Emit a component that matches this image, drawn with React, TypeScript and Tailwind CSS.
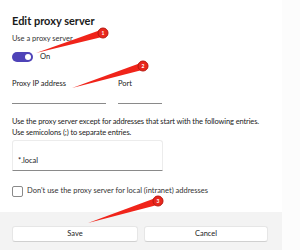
import React from 'react'

const font = { fontFamily: 'Lato, "Open Sans", sans-serif' }

function Marker({ tip, end, n }: { tip: [number, number]; end: [number, number]; n: string }) {
  const dx = end[0] - tip[0]
  const dy = end[1] - tip[1]
  const len = Math.hypot(dx, dy)
  const px = -dy / len
  const py = dx / len
  const w = 3.6
  const pts = [
    `${tip[0]},${tip[1]}`,
    `${end[0] + px * w},${end[1] + py * w}`,
    `${end[0] - px * w},${end[1] - py * w}`,
  ].join(' ')
  return (
    <g>
      <polygon points={pts} fill="#f0241a" />
      <circle cx={end[0]} cy={end[1]} r={5} fill="#e8271c" stroke="#b8160e" strokeWidth={1} />
      <text x={end[0]} y={end[1] + 1.8} fontSize={5} fill="#fff" textAnchor="middle" fontFamily="Lato, sans-serif" fontWeight={700}>
        {n}
      </text>
    </g>
  )
}

export default function App() {
  return (
    <div className="relative w-[300px] h-[250px] bg-white overflow-hidden flex text-[#1b1b1b]" style={font}>
      <div className="w-[282px] h-full flex flex-col">
        <div className="px-3 pt-[13px]">
          <h1 className="text-[11px] leading-[16px] font-bold text-[#1a1a1a]">Edit proxy server</h1>
          <p className="mt-[4px] text-[7.5px] leading-[12px] text-[#333]">Use a proxy server</p>
          <div className="mt-[7px] flex items-center gap-[7px] h-[10px]">
            <div className="w-[21px] h-[10px] rounded-full bg-[#4f43b8] flex items-center justify-end pr-[2px]">
              <div className="w-[6px] h-[6px] rounded-full bg-white" />
            </div>
            <span className="text-[7.5px] leading-[10px] text-[#222]">On</span>
          </div>

          <div className="mt-[16px] flex gap-[12px]">
            <div className="w-[94px]">
              <p className="text-[7.5px] leading-[12px] text-[#222]">Proxy IP address</p>
              <div className="h-[14px] border-b border-[#8a8a8a]" />
            </div>
            <div className="w-[44px]">
              <p className="text-[7.5px] leading-[12px] text-[#222]">Port</p>
              <div className="h-[14px] border-b border-[#8a8a8a]" />
            </div>
          </div>

          <p className="mt-[12px] text-[7.5px] leading-[11px] tracking-[-0.12px] text-[#222] whitespace-nowrap">
            Use the proxy server except for addresses that start with the following entries.
            <br />
            Use semicolons (;) to separate entries.
          </p>

          <div className="mt-[2px] w-[151px] h-[31px] border border-[#ececec] border-b-[#8a8a8a] rounded-t-[3px] px-[5px] pt-[4px]">
            <span className="text-[7.5px] leading-[12px] text-[#222]">*.local</span>
          </div>

          <div className="mt-[14px] flex items-center gap-[4px]">
            <div className="w-[11px] h-[11px] rounded-[2px] border border-[#8a8a8a] bg-white" />
            <span className="text-[7.5px] leading-[12px] text-[#333]">
              Don't use the proxy server for local (intranet) addresses
            </span>
          </div>
        </div>

        <div className="mt-auto h-[38px] bg-[#f3f3f3] pl-3 pt-[14px] flex gap-[6px]">
          <button className="w-[126px] h-[16px] bg-white border border-[#e6e6e6] border-b-[#d0d0d0] rounded-[3px] text-[7.5px] leading-[14px] text-[#222]">
            Save
          </button>
          <button className="w-[124px] h-[16px] bg-white border border-[#e6e6e6] border-b-[#d0d0d0] rounded-[3px] text-[7.5px] leading-[14px] text-[#222]">
            Cancel
          </button>
        </div>
      </div>
      <div className="flex-1 bg-[#fcfcfc]" />

      <svg className="absolute inset-0 pointer-events-none" width={300} height={250} viewBox="0 0 300 250">
        <Marker tip={[36, 53]} end={[103, 33]} n="1" />
        <Marker tip={[72, 88]} end={[143, 66]} n="2" />
        <Marker tip={[88, 223]} end={[158, 201]} n="3" />
      </svg>
    </div>
  )
}
